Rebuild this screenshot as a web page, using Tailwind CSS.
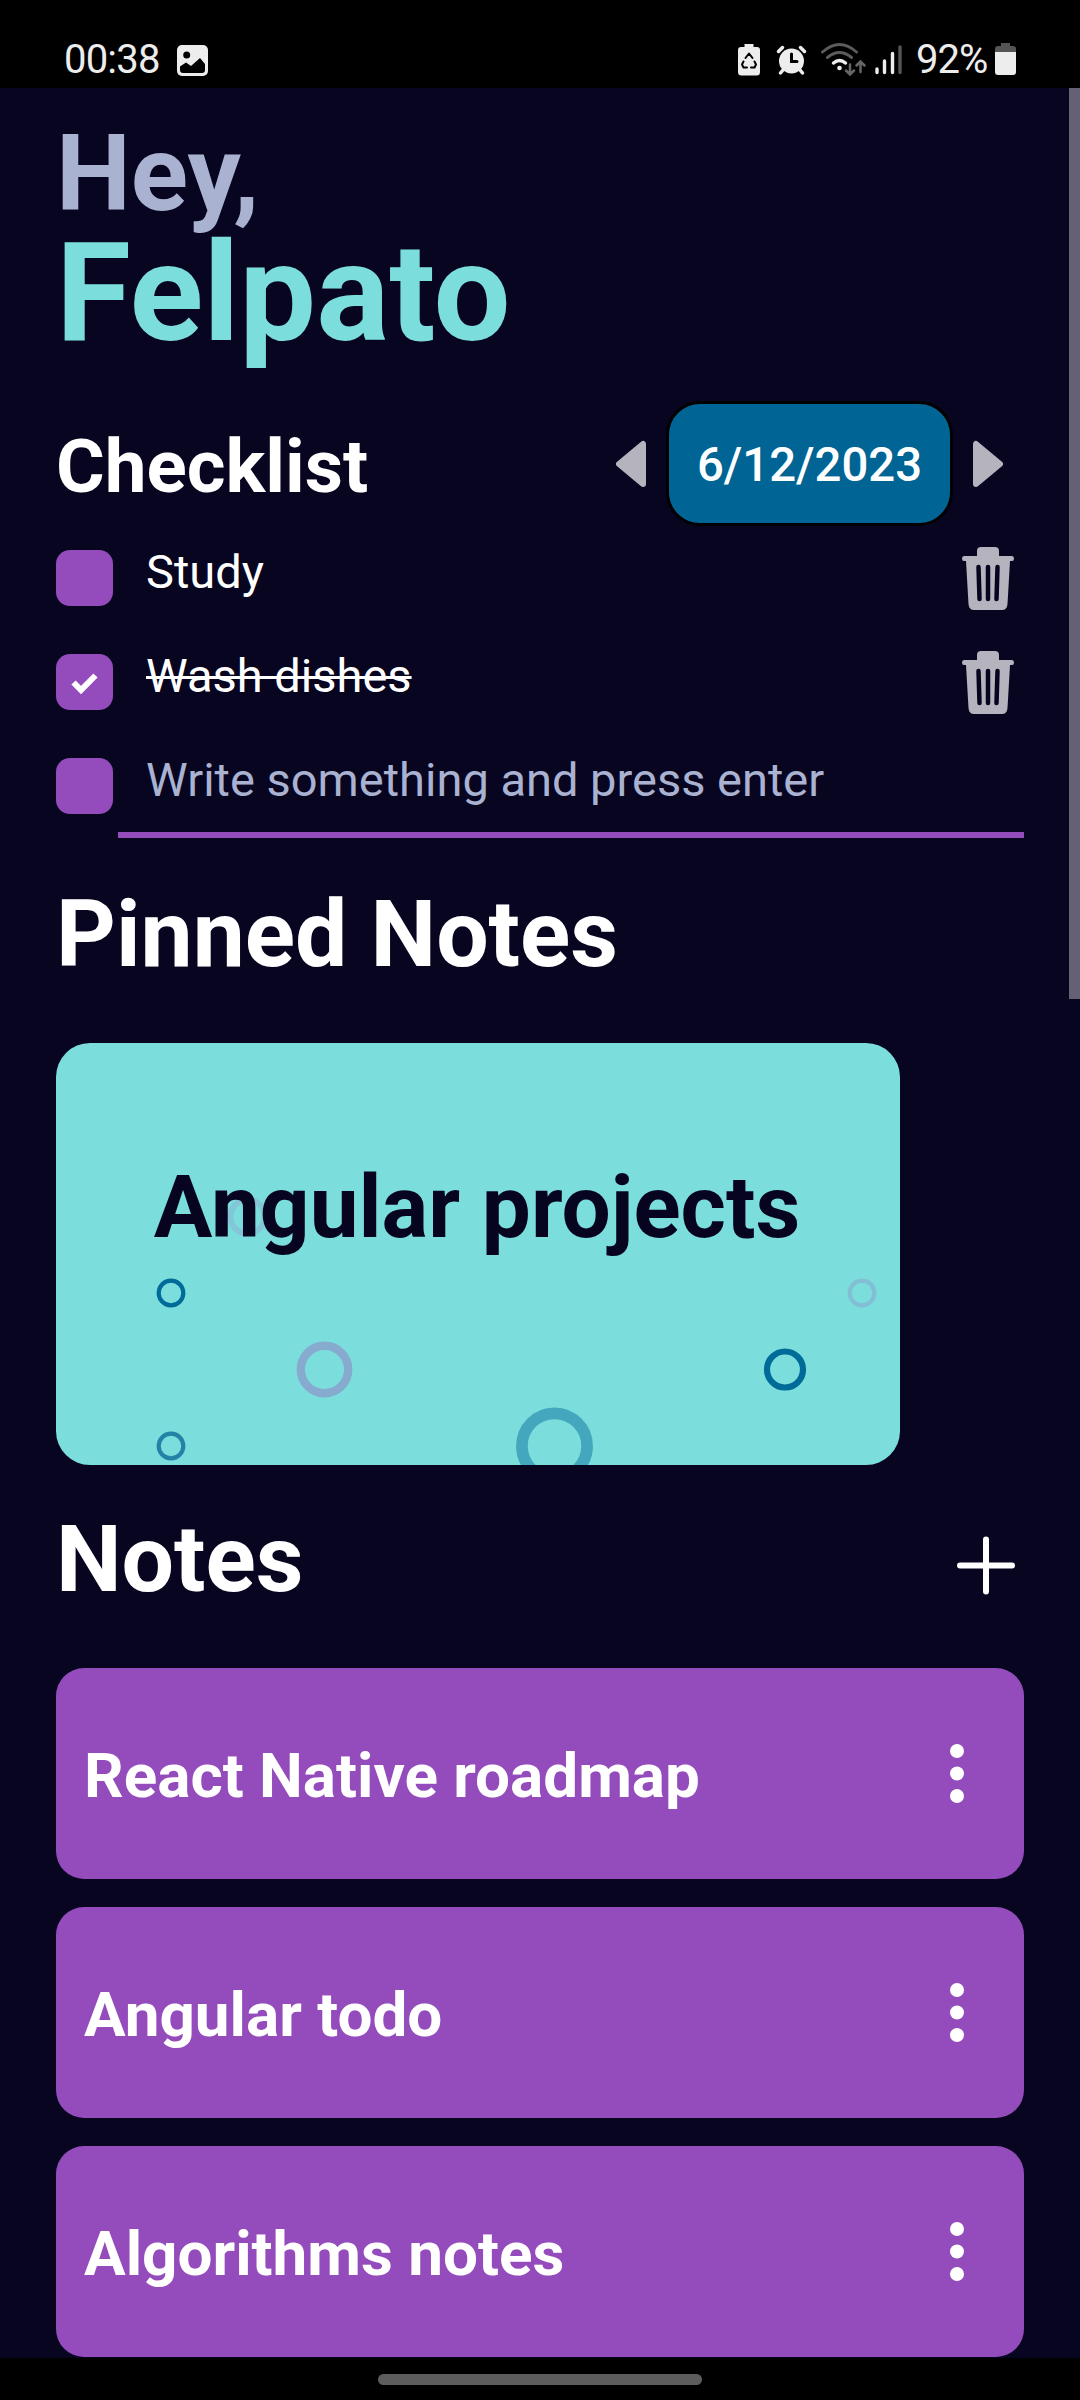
<!DOCTYPE html>
<html lang="en">
<head>
<meta charset="utf-8">
<title>Notes</title>
<script src="https://cdn.jsdelivr.net/npm/@tailwindcss/browser@4"></script>
</head>
<body class="relative w-[1080px] h-[2400px] overflow-hidden bg-[#080520] font-['Roboto',sans-serif] text-white flex flex-col">
<header class="h-[88px] shrink-0 bg-black flex items-center pl-[64px] pr-[64px] pt-[32px] text-[#ededed] text-[40px] leading-[56px]">
  <span class="w-[113px] whitespace-nowrap tracking-[-0.8px]">00:38</span>
  <svg class="w-[31px] h-[31px]" viewBox="0 0 31 31"><rect width="31" height="31" rx="5" fill="#ededed"/><circle cx="9.700" cy="10" r="3.500" fill="#000"/><path d="M3 21.500 9 17.500 14 21 23 13 28 19V25Q28 28 25 28H6Q3 28 3 25Z" fill="#000"/></svg>
  <div class="ml-auto flex items-center">
    <svg class="w-[178px] h-[50px]" viewBox="730 35 178 50" fill="none" stroke-linecap="round">
      <path d="M744.500 44h9v3h3.500q3 0 3 3v22q0 3.500-3.500 3.500h-15q-3.500 0-3.500-3.500V50q0-3 3-3h3.500z" fill="#ededed"/>
      <path d="M745.500 58 749 53.500 752.500 58M754.500 61.500 756 64.500 754.500 67.500H751M747 67.500H743.500L742 64.500 743.500 61.500" stroke="#000" stroke-width="2" stroke-linejoin="round"/>
      <circle cx="791.500" cy="61" r="12.500" fill="#ededed"/><path d="M782.500 47.500 778.500 51.500M800.500 47.500 804.500 51.500M783 70 780.500 73M800 70 802.500 73" stroke="#ededed" stroke-width="3.500"/><path d="M791.500 54V61.500H797" stroke="#000" stroke-width="3"/>
      <path d="M822.500 52Q839.500 37 856.500 52M827.500 57.500Q839.500 47.500 851.500 57.500" stroke="#5c5c5c" stroke-width="3"/><path d="M833.500 63Q839.500 58 845.500 63" stroke="#ededed" stroke-width="3.500"/><circle cx="839.500" cy="68" r="2.300" fill="#ededed"/>
      <path d="M850 64.500V74M846 70.500 850 74.500 854 70.500M860.500 72V62M856.500 65.500 860.500 61.500 864.500 65.500" stroke="#666" stroke-width="2.500"/>
      <path d="M877 69V72.500M884.500 61V72.500M892.500 53.500V72.500" stroke="#ededed" stroke-width="3.400"/><path d="M900 47V72.500" stroke="#555" stroke-width="3.400"/>
    </svg>
    <span class="ml-[8px] w-[78px] whitespace-nowrap tracking-[-1px]">92%</span>
    <svg class="w-[22px] h-[50px]" viewBox="994 35 22 50"><path d="M1001 43h9v3h3q3 0 3 3v3h-21v-3q0-3 3-3h3z" fill="#555"/><path d="M995 52h21v20q0 3-3 3h-15q-3 0-3-3z" fill="#ededed"/></svg>
  </div>
</header>
<main class="h-[2270px] shrink-0 pl-[56px] pr-[56px] flex flex-col overflow-hidden">
  <h1 class="pt-[29px] font-bold">
    <span class="block text-[106px] leading-[114px] text-[#a9b2d0]">Hey,</span>
    <span class="block text-[136.500px] leading-[125px] text-[#7cdedc]">Felpato</span>
  </h1>
  <section class="mt-[45px]">
    <div class="flex items-center h-[125px] pr-[20px]">
      <h2 class="text-[74.500px] leading-[88px] font-bold mr-auto pt-[6px]">Checklist</h2>
      <svg class="w-[32px] h-[48px]" viewBox="0 0 32 48"><path d="M4 24 28 4V44Z" fill="#b5b3bd" stroke="#b5b3bd" stroke-width="6" stroke-linejoin="round"/></svg>
      <button class="ml-[19px] mr-[19px] w-[287px] h-[125px] pt-[4px] rounded-[34px] border-[3px] border-black bg-[#006494] text-[47.300px] font-medium">6/12/2023</button>
      <svg class="w-[32px] h-[48px]" viewBox="0 0 32 48"><path d="M28 24 4 4V44Z" fill="#b5b3bd" stroke="#b5b3bd" stroke-width="6" stroke-linejoin="round"/></svg>
    </div>
    <ul class="text-[47px] leading-[56px]">
      <li class="h-[104px] pt-[24px] flex items-start">
        <span class="w-[57px] h-[56px] rounded-[14px] bg-[#944bbb]"></span>
        <span class="ml-[33px] -mt-[6px]">Study</span>
        <svg class="ml-auto mr-[9px] -mt-[4px] w-[54px] h-[64px]" viewBox="0 0 54 64"><path d="M16 10V5Q16 1 20 1H34Q38 1 38 5V10H51Q53 10 53 12.500T51 15H49L46.500 58Q46 64 41 64H13Q8 64 7.500 58L5 15H3Q1 15 1 12.500T3 10Z" fill="#b5b3bd"/><path d="M17.500 21 18.500 53M27 21V53M36.500 21 35.500 53" stroke="#070420" stroke-width="4.500" stroke-linecap="round"/></svg>
      </li>
      <li class="h-[104px] pt-[24px] flex items-start">
        <span class="w-[57px] h-[56px] rounded-[14px] bg-[#944bbb]"><svg class="w-[57px] h-[56px]" viewBox="0 0 57 56"><path d="M17.500 28.500 25 36 39.500 21.500" fill="none" stroke="#fff" stroke-width="6"/></svg></span>
        <span class="ml-[33px] -mt-[6px] line-through decoration-[3px]">Wash dishes</span>
        <svg class="ml-auto mr-[9px] -mt-[4px] w-[54px] h-[64px]" viewBox="0 0 54 64"><path d="M16 10V5Q16 1 20 1H34Q38 1 38 5V10H51Q53 10 53 12.500T51 15H49L46.500 58Q46 64 41 64H13Q8 64 7.500 58L5 15H3Q1 15 1 12.500T3 10Z" fill="#b5b3bd"/><path d="M17.500 21 18.500 53M27 21V53M36.500 21 35.500 53" stroke="#070420" stroke-width="4.500" stroke-linecap="round"/></svg>
      </li>
      <li class="h-[104px] pt-[24px] flex items-start">
        <span class="w-[57px] h-[56px] rounded-[14px] bg-[#944bbb]"></span>
        <span class="ml-[5px] h-[86px] grow border-b-[6px] border-[#944bbb] pl-[28px] -mt-[6px] text-[#a9b2d0]">Write something and press enter</span>
      </li>
    </ul>
  </section>
  <h2 class="mt-[42px] text-[93px] leading-[110px] font-bold">Pinned Notes</h2>
  <div class="relative mt-[53px] w-[844px] h-[422px] shrink-0 rounded-[34px] bg-[#7cdedc] overflow-hidden">
    <svg class="absolute inset-0 w-[844px] h-[422px]" viewBox="56 1043 844 422" fill="none">
      <circle cx="247.500" cy="1216.500" r="17" stroke="#82c6d8" stroke-width="6"/>
      <circle cx="171" cy="1293" r="12.300" stroke="#006b98" stroke-width="4.200"/>
      <circle cx="862" cy="1293" r="12.300" stroke="#82bfd4" stroke-width="4.200"/>
      <circle cx="324.500" cy="1369.500" r="23.700" stroke="#86abcf" stroke-width="8.400"/>
      <circle cx="785" cy="1369.500" r="18" stroke="#006b98" stroke-width="6.200"/>
      <circle cx="171" cy="1446" r="12.300" stroke="#2383a6" stroke-width="4.200"/>
      <circle cx="554.500" cy="1446" r="32.600" stroke="#45a7be" stroke-width="11.700"/>
    </svg>
    <h3 class="relative pt-[113px] -ml-[2px] text-center text-[87.200px] leading-[102px] font-bold text-[#070420]">Angular projects</h3>
  </div>
  <div class="mt-[40px] h-[110px] flex items-center justify-between pr-[8px]">
    <h2 class="text-[93px] leading-[110px] font-bold">Notes</h2>
    <svg class="w-[60px] h-[70px]" viewBox="0 0 60 70"><path d="M30 14.500V66.500M4 40.500H56" stroke="#fff" stroke-width="6" stroke-linecap="round"/></svg>
  </div>
  <div class="mt-[53px] flex flex-col gap-[28px] text-[62px] leading-[72px] font-bold">
    <div class="h-[211px] rounded-[28px] bg-[#944bbb] flex items-center pl-[28px] pr-[60px]">
      <span class="mr-auto pt-[5px]">React Native roadmap</span>
      <svg class="w-[14px] h-[60px]" viewBox="0 0 14 60" fill="#fff"><circle cx="7" cy="7" r="7"/><circle cx="7" cy="29.500" r="7"/><circle cx="7" cy="52" r="7"/></svg>
    </div>
    <div class="h-[211px] rounded-[28px] bg-[#944bbb] flex items-center pl-[28px] pr-[60px]">
      <span class="mr-auto pt-[5px]">Angular todo</span>
      <svg class="w-[14px] h-[60px]" viewBox="0 0 14 60" fill="#fff"><circle cx="7" cy="7" r="7"/><circle cx="7" cy="29.500" r="7"/><circle cx="7" cy="52" r="7"/></svg>
    </div>
    <div class="h-[211px] rounded-[28px] bg-[#944bbb] flex items-center pl-[28px] pr-[60px]">
      <span class="mr-auto pt-[5px]">Algorithms notes</span>
      <svg class="w-[14px] h-[60px]" viewBox="0 0 14 60" fill="#fff"><circle cx="7" cy="7" r="7"/><circle cx="7" cy="29.500" r="7"/><circle cx="7" cy="52" r="7"/></svg>
    </div>
  </div>
</main>
<div class="absolute right-0 top-[88px] w-[11px] h-[911px] bg-[#656073]"></div>
<footer class="h-[42px] shrink-0 bg-black flex justify-center pt-[16px]"><div class="w-[324px] h-[11px] rounded-full bg-[#5d5d5d]"></div></footer>
</body>
</html>
